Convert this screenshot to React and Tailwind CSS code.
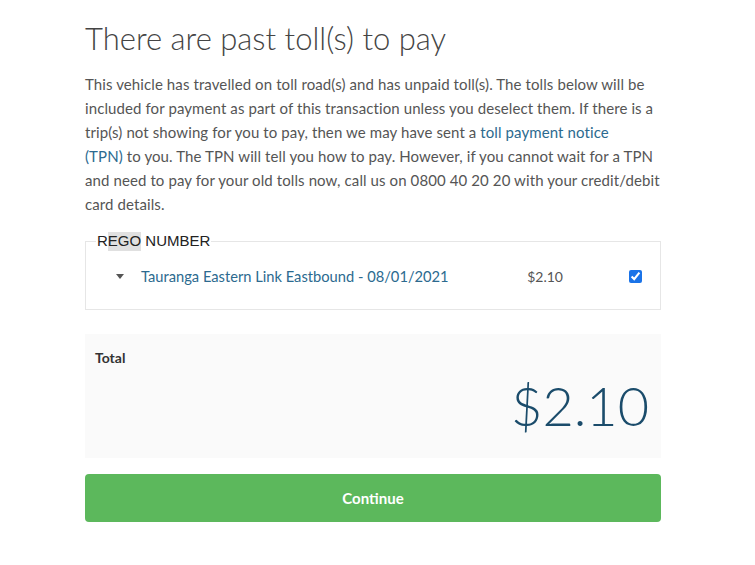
import { useState } from 'react';

const App = () => {
  const [checked, setChecked] = useState(true);

  return (
    <div className="min-h-screen bg-white" style={{ fontFamily: 'Lato, "Noto Sans", sans-serif' }}>
      <div className="w-[576px] ml-[85px] pt-[18px]">
        <h1 className="text-[31px] font-light text-[#444] leading-[40px]">There are past toll(s) to pay</h1>

        <p className="mt-[14px] text-[15px] leading-[24px] text-[#555] tracking-[0.1px]">
          This vehicle has travelled on toll road(s) and has unpaid toll(s). The tolls below will be included for payment as
          part of this transaction unless you deselect them. If there is a trip(s) not showing for you to pay, then we may
          have sent a <a href="#" className="text-[#2c6a8f]">toll payment notice</a>{' '}
          <span className="whitespace-nowrap"><a href="#" className="text-[#2c6a8f]">(TPN)</a> to</span> you. The TPN will
          tell you how to pay. However, if you cannot wait for a TPN and need to pay for your old tolls now, call us on 0800
          40 20 20 with your credit/debit card details.
        </p>

        <fieldset className="mt-[16px] border border-[#e6e6e6] px-[10px] pb-[17px]">
          <legend className="px-[1px] text-[15px] text-[#222] uppercase leading-[18px]" style={{ fontFamily: '"Liberation Sans", sans-serif' }}>
            R<span className="bg-[#e0e0e0] pb-[2px]">EGO</span> NUMBER
          </legend>
          <div className="flex items-center h-[32px] mt-[10px]">
            <span className="w-0 h-0 ml-[20px] border-l-[4px] border-r-[4px] border-t-[5px] border-l-transparent border-r-transparent border-t-[#555]"></span>
            <a href="#" className="ml-[17px] text-[14.7px] text-[#2c6a8f]">Tauranga Eastern Link Eastbound - 08/01/2021</a>
            <span className="ml-auto text-[14px] text-[#555]">$2.10</span>
            <input
              type="checkbox"
              checked={checked}
              onChange={() => setChecked(!checked)}
              className="ml-[66px] mr-[8px] w-[13px] h-[13px] accent-[#1a73e8]"
            />
          </div>
        </fieldset>

        <div className="mt-[24px] bg-[#fafafa] h-[124px] px-[10px] pt-[13px]">
          <div className="text-[14px] font-bold text-[#333]">Total</div>
          <div className="text-right pr-[2px] text-[54px] font-light leading-[60px] text-[#1b4c6b] mt-[8px]">$2.10</div>
        </div>

        <button className="mt-[16px] w-full h-[48px] rounded-[4px] bg-[#5cb85c] text-white text-[15px] font-bold">
          Continue
        </button>
      </div>
    </div>
  );
};

export default App;
